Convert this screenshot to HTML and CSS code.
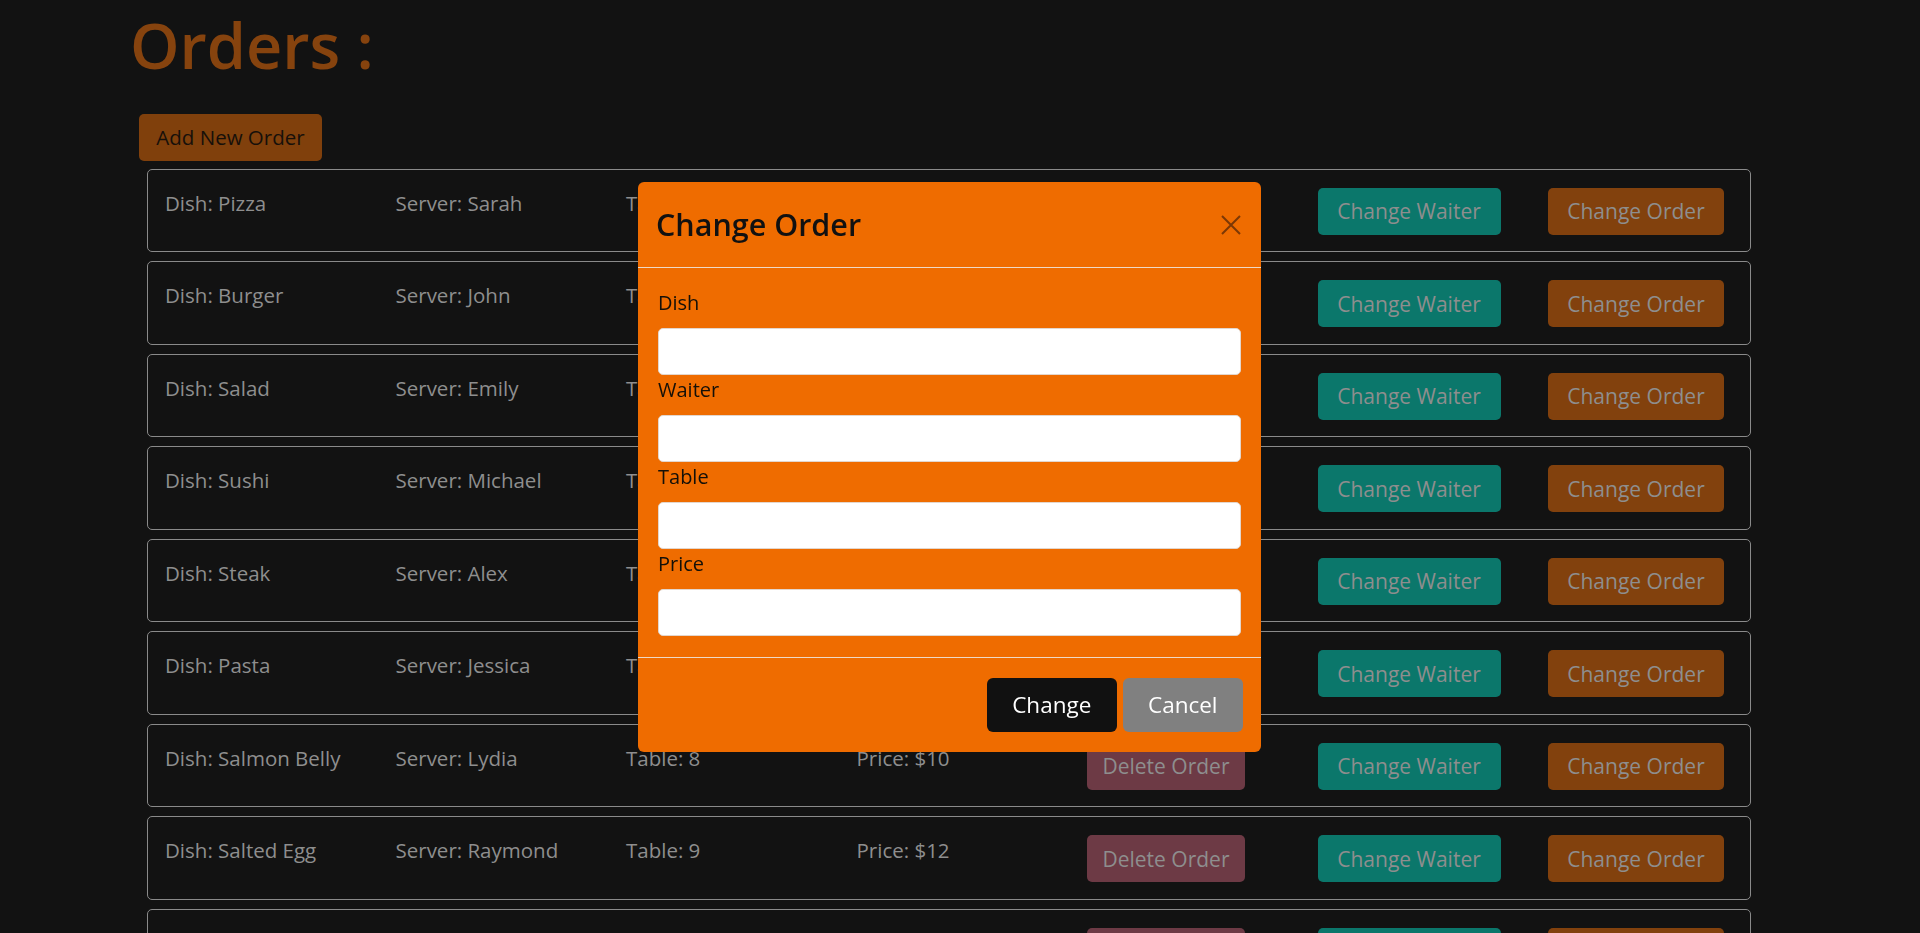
FILE: index.html
```html
<!DOCTYPE html>
<html lang="en">
<head>
<meta charset="utf-8">
<title>Orders</title>
<link rel="stylesheet" href="styles.css">
</head>
<body class="modal-open">
<main class="page">
  <h1 class="page-title">Orders :</h1>
  <button class="btn btn-add">Add New Order</button>
  <div class="orders">
    <div class="order">
      <span class="cell">Dish: Pizza</span><span class="cell">Server: Sarah</span><span class="cell">Table: 1</span><span class="cell">Price: $15</span>
      <div class="cell"><button class="btn btn-delete">Delete Order</button></div>
      <div class="cell"><button class="btn btn-waiter">Change Waiter</button></div>
      <div class="cell"><button class="btn btn-order">Change Order</button></div>
    </div>
    <div class="order">
      <span class="cell">Dish: Burger</span><span class="cell">Server: John</span><span class="cell">Table: 2</span><span class="cell">Price: $10</span>
      <div class="cell"><button class="btn btn-delete">Delete Order</button></div>
      <div class="cell"><button class="btn btn-waiter">Change Waiter</button></div>
      <div class="cell"><button class="btn btn-order">Change Order</button></div>
    </div>
    <div class="order">
      <span class="cell">Dish: Salad</span><span class="cell">Server: Emily</span><span class="cell">Table: 3</span><span class="cell">Price: $8</span>
      <div class="cell"><button class="btn btn-delete">Delete Order</button></div>
      <div class="cell"><button class="btn btn-waiter">Change Waiter</button></div>
      <div class="cell"><button class="btn btn-order">Change Order</button></div>
    </div>
    <div class="order">
      <span class="cell">Dish: Sushi</span><span class="cell">Server: Michael</span><span class="cell">Table: 4</span><span class="cell">Price: $20</span>
      <div class="cell"><button class="btn btn-delete">Delete Order</button></div>
      <div class="cell"><button class="btn btn-waiter">Change Waiter</button></div>
      <div class="cell"><button class="btn btn-order">Change Order</button></div>
    </div>
    <div class="order">
      <span class="cell">Dish: Steak</span><span class="cell">Server: Alex</span><span class="cell">Table: 5</span><span class="cell">Price: $25</span>
      <div class="cell"><button class="btn btn-delete">Delete Order</button></div>
      <div class="cell"><button class="btn btn-waiter">Change Waiter</button></div>
      <div class="cell"><button class="btn btn-order">Change Order</button></div>
    </div>
    <div class="order">
      <span class="cell">Dish: Pasta</span><span class="cell">Server: Jessica</span><span class="cell">Table: 6</span><span class="cell">Price: $14</span>
      <div class="cell"><button class="btn btn-delete">Delete Order</button></div>
      <div class="cell"><button class="btn btn-waiter">Change Waiter</button></div>
      <div class="cell"><button class="btn btn-order">Change Order</button></div>
    </div>
    <div class="order">
      <span class="cell">Dish: Salmon Belly</span><span class="cell">Server: Lydia</span><span class="cell">Table: 8</span><span class="cell">Price: $10</span>
      <div class="cell"><button class="btn btn-delete">Delete Order</button></div>
      <div class="cell"><button class="btn btn-waiter">Change Waiter</button></div>
      <div class="cell"><button class="btn btn-order">Change Order</button></div>
    </div>
    <div class="order">
      <span class="cell">Dish: Salted Egg</span><span class="cell">Server: Raymond</span><span class="cell">Table: 9</span><span class="cell">Price: $12</span>
      <div class="cell"><button class="btn btn-delete">Delete Order</button></div>
      <div class="cell"><button class="btn btn-waiter">Change Waiter</button></div>
      <div class="cell"><button class="btn btn-order">Change Order</button></div>
    </div>
    <div class="order">
      <span class="cell">Dish: Fried Rice</span><span class="cell">Server: Kevin</span><span class="cell">Table: 10</span><span class="cell">Price: $9</span>
      <div class="cell"><button class="btn btn-delete">Delete Order</button></div>
      <div class="cell"><button class="btn btn-waiter">Change Waiter</button></div>
      <div class="cell"><button class="btn btn-order">Change Order</button></div>
    </div>
  </div>
</main>

<div class="modal">
  <div class="modal-dialog">
    <div class="modal-header">
      <h4 class="modal-title">Change Order</h4>
      <button class="btn-close" aria-label="Close">
        <svg width="20" height="20" viewBox="0 0 20 20"><path d="M1 1 L19 19 M19 1 L1 19" stroke="#7c3805" stroke-width="2" fill="none"/></svg>
      </button>
    </div>
    <div class="modal-body">
      <div class="field"><label>Dish</label><input type="text"></div>
      <div class="field"><label>Waiter</label><input type="text"></div>
      <div class="field"><label>Table</label><input type="text"></div>
      <div class="field"><label>Price</label><input type="text"></div>
    </div>
    <div class="modal-footer">
      <button class="btn btn-change">Change</button>
      <button class="btn btn-cancel">Cancel</button>
    </div>
  </div>
</div>
</body>
</html>
```

FILE: styles.css
```css
* { box-sizing: border-box; }

html, body {
  margin: 0;
  height: 100%;
}

body {
  background: #121212;
  font-family: "Open Sans", sans-serif;
}

body.modal-open {
  overflow: hidden;
}

.page {
  padding-left: 130px;
}

.page-title {
  margin: 7px 0 30px;
  font-size: 63px;
  font-weight: 600;
  line-height: 76.8px;
  color: #86430e;
}

.btn {
  display: inline-block;
  font-family: inherit;
  font-size: 21px;
  line-height: 30px;
  padding: 7.5px 0;
  border: 1px solid transparent;
  border-radius: 5px;
  text-align: center;
  cursor: pointer;
  color: #8e8e8e;
}

.btn-add {
  display: block;
  margin-left: 9px;
  width: 183px;
  font-size: 20.5px;
  background: #80400c;
  color: #17100a;
}

.orders {
  margin: 8px 0 0 17px;
  width: 1604px;
  display: flex;
  flex-direction: column;
  gap: 9px;
}

.order {
  display: grid;
  grid-template-columns: repeat(6, 230.5px) auto;
  align-items: start;
  height: 83.5px;
  padding: 18px 17px;
  border: 1px solid #8a8a8a;
  border-radius: 5px;
  color: #8e8e8e;
  font-size: 20.5px;
  line-height: 30px;
  flex-shrink: 0;
}

.btn-delete {
  width: 158px;
  background: #6d3a45;
}

.btn-waiter {
  width: 183px;
  background: #0b776b;
}

.btn-order {
  width: 176px;
  background: #82410d;
}

/* Modal */
.modal {
  position: fixed;
  inset: 0;
  padding-right: 21px;
}

.modal-dialog {
  width: 623px;
  margin: 182px auto 0;
  background: #ef6c00;
  border-radius: 6px;
}

.modal-header {
  height: 86px;
  display: flex;
  align-items: center;
  justify-content: space-between;
  padding: 0 20px 0 18px;
  border-bottom: 1px solid #efd9c6;
}

.modal-title {
  margin: 0;
  font-size: 30.5px;
  font-weight: 600;
  line-height: 1.2;
  color: #111;
}

.btn-close {
  width: 20px;
  height: 20px;
  padding: 0;
  border: 0;
  background: none;
  display: flex;
}

.modal-body {
  padding: 20px 20px 21px;
}

.field label {
  display: block;
  font-size: 20px;
  line-height: 30px;
  margin-bottom: 10px;
  color: #141008;
}

.field input {
  display: block;
  width: 100%;
  height: 47px;
  border: 1px solid #e3d6cc;
  border-radius: 5px;
  background: #fff;
}

.modal-footer {
  display: flex;
  justify-content: flex-end;
  gap: 6px;
  padding: 19.5px 18px 19.5px;
  border-top: 1px solid #efd9c6;
}

.btn-change {
  width: 129.5px;
  height: 54.5px;
  font-size: 22.5px;
  border-radius: 6px;
  background: #111;
  color: #fff;
}

.btn-cancel {
  width: 120.5px;
  height: 54.5px;
  font-size: 22.5px;
  border-radius: 6px;
  background: #808080;
  color: #fff;
}
```
